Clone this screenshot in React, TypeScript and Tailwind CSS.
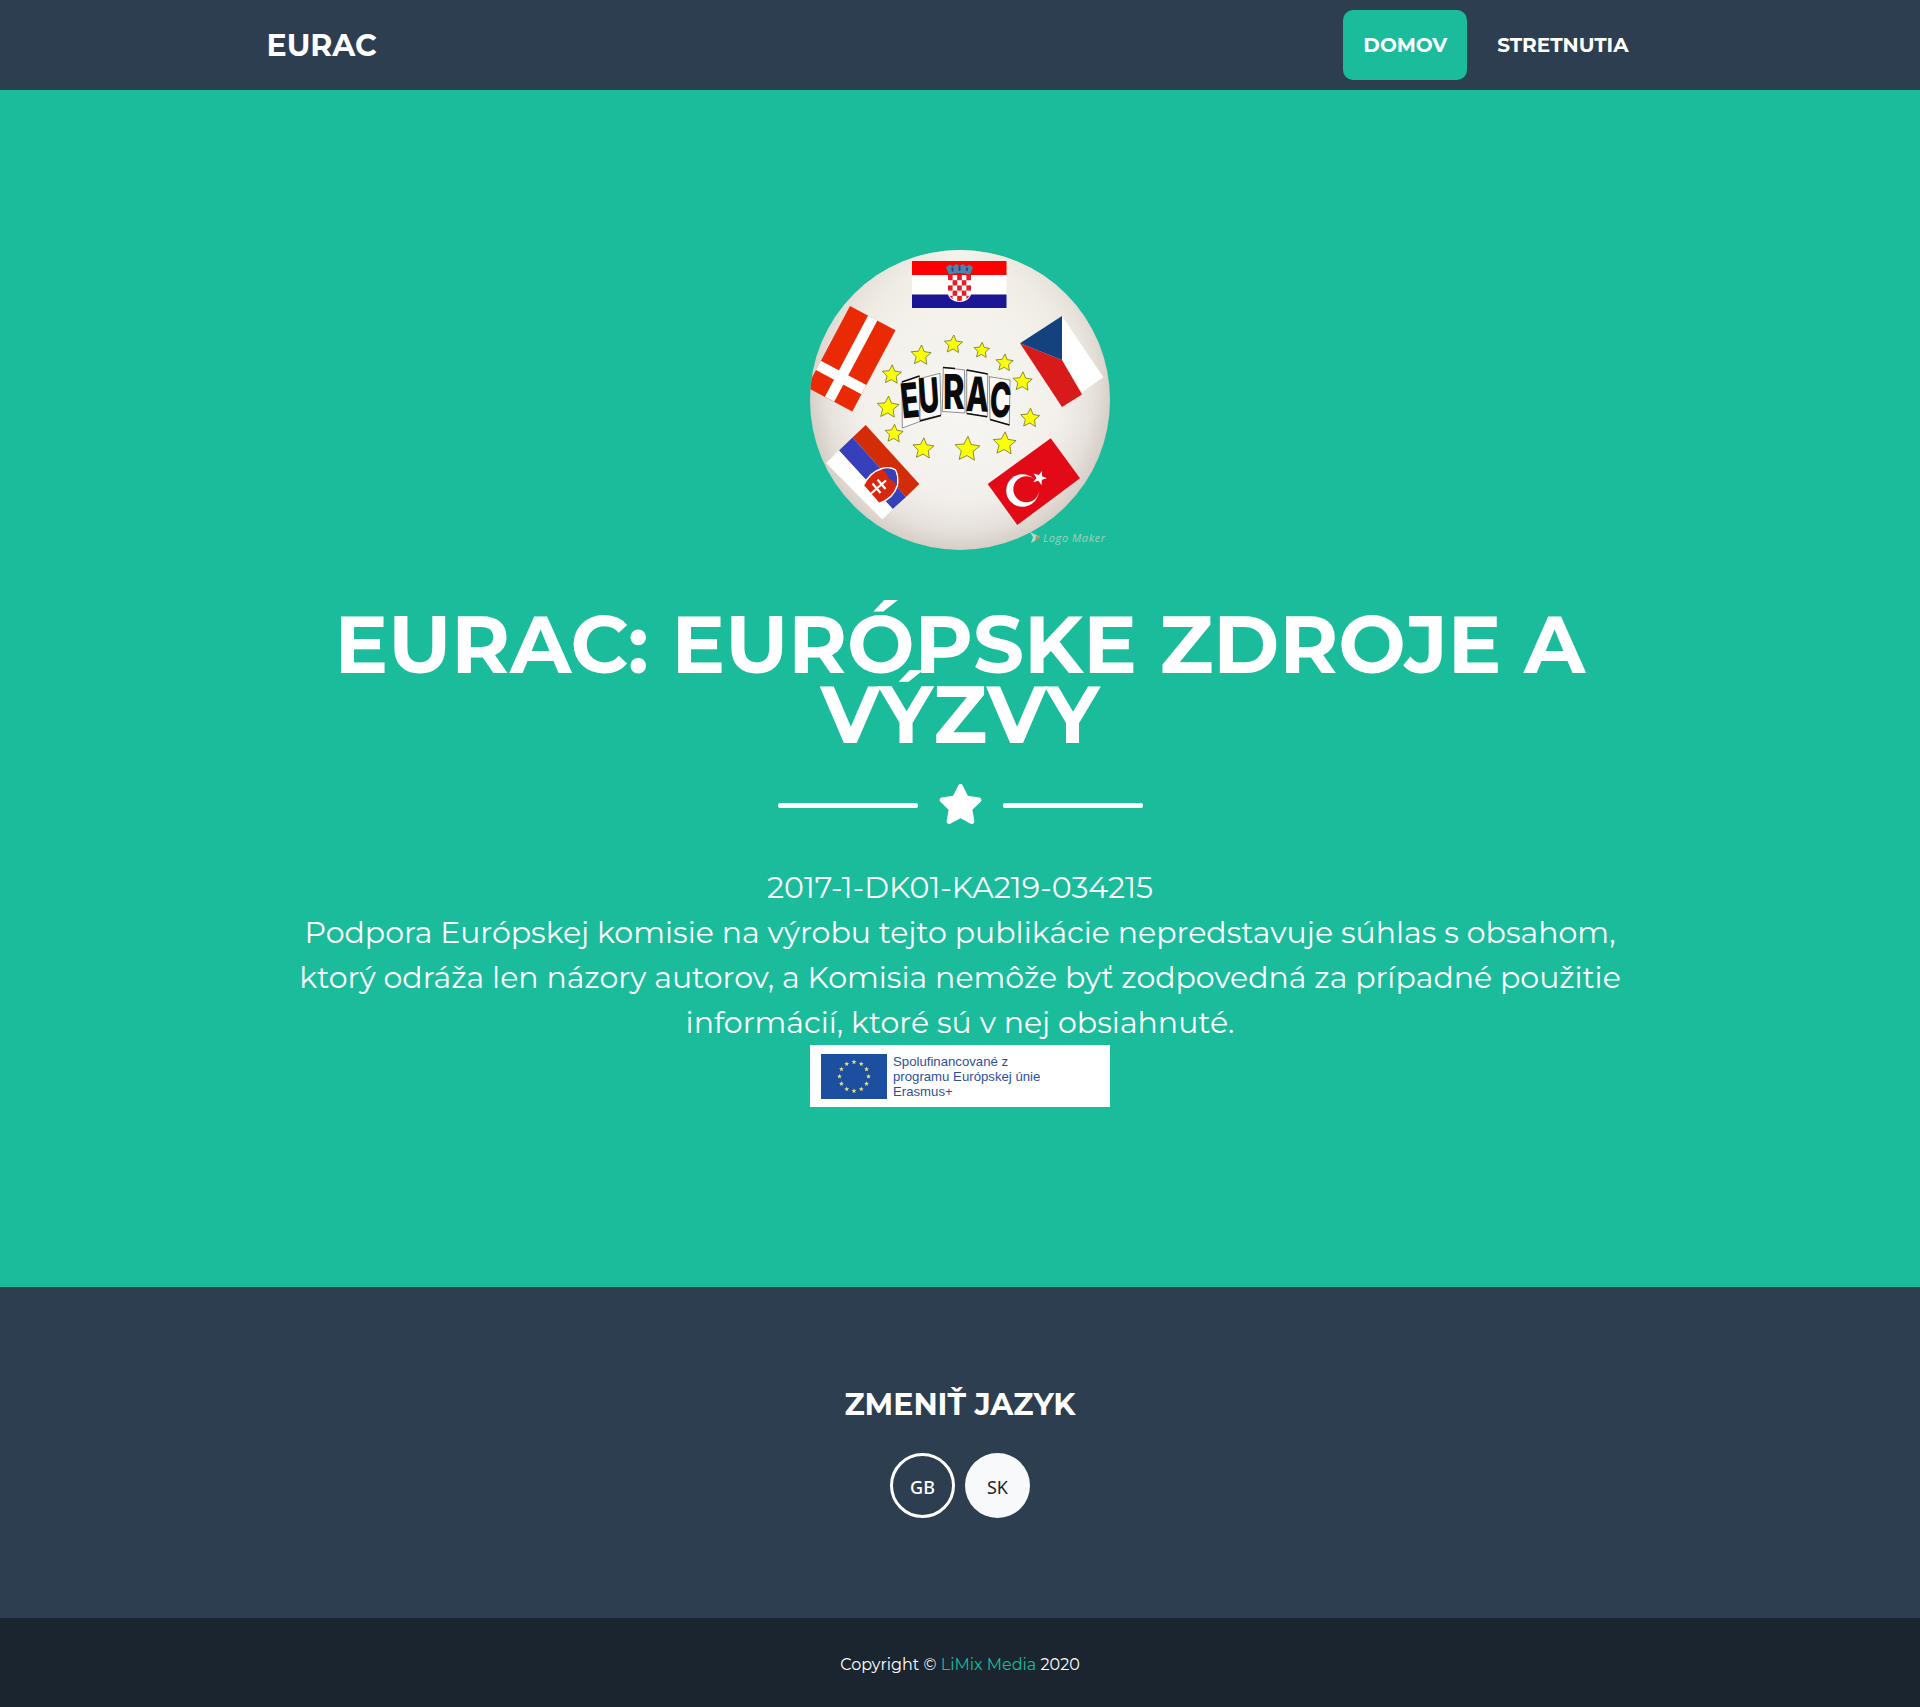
import { FaStar } from "react-icons/fa";

function star(cx: number, cy: number, r: number, turn = 0, inner = 0.45) {
  return Array.from({ length: 10 }, (_, i) => {
    const a = ((i * 36 - 90 + turn) * Math.PI) / 180;
    const d = i % 2 ? r * inner : r;
    return `${(cx + d * Math.cos(a)).toFixed(2)},${(cy + d * Math.sin(a)).toFixed(2)}`;
  }).join(" ");
}

const ring = [
  [143.3, 94.5, 9.5], [111, 105.5, 10.5], [171.7, 100.5, 8.2], [194.5, 113, 9], [81.7, 124.8, 10],
  [212.5, 131.8, 10], [78, 157.5, 11.5], [84, 183.8, 9.5], [113.3, 198.8, 11], [157.3, 199.3, 13],
  [194.5, 193.8, 12], [220, 168.2, 10],
];

const tiles = ["92,132 109.5,126 110,171.5 92.3,178", "110,128.5 130,123.3 131,165 110,170", "133.3,117.3 154.5,120 155,163 132.3,161.5", "156.7,120 177.7,124 177.3,166.5 156.7,163.3", "179.3,126.7 200,130 199.3,175 180,169.3"];

const letters = [
  { c: "E", x: 101.5, y: 167.5, s: 0.62, r: -6 },
  { c: "U", x: 120, y: 162.5, s: 0.6, r: -4 },
  { c: "R", x: 143.8, y: 159, s: 0.68, r: 0 },
  { c: "A", x: 167, y: 161.5, s: 0.62, r: 2 },
  { c: "C", x: 189.8, y: 167, s: 0.6, r: 3 },
];

const checks = Array.from({ length: 25 }, (_, i) => i).filter((i) => i % 2 === 0);

function Logo() {
  return (
    <svg viewBox="0 0 300 300" className="h-[300px] w-[300px] overflow-visible">
      <defs>
        <radialGradient id="paper">
          <stop offset="0" stopColor="#f8f7f5" />
          <stop offset="0.65" stopColor="#f3f0ec" />
          <stop offset="0.88" stopColor="#e6e0da" />
          <stop offset="1" stopColor="#d6cec7" />
        </radialGradient>
        <radialGradient id="glow" cx="0.5" cy="0" r="0.75">
          <stop offset="0" stopColor="#f4f2ea" />
          <stop offset="1" stopColor="#f4f2ea" stopOpacity="0" />
        </radialGradient>
        <clipPath id="disc"><circle cx="150" cy="150" r="150" /></clipPath>
        <clipPath id="arms"><path d="M138 25h23v14c0 8-5 12-11.500 12s-11.500-4-11.500-12z" /></clipPath>
      </defs>
      <g clipPath="url(#disc)">
        <rect width="300" height="300" fill="url(#paper)" />
        <rect width="300" height="300" fill="url(#glow)" />

        <rect x="102" y="11" width="94.500" height="14" fill="#fe0000" />
        <rect x="102" y="25" width="94.500" height="19.500" fill="#fff" />
        <rect x="102" y="44.500" width="94.500" height="13.500" fill="#1b1695" />
        <path d="M137 25h25v14c0 9-6 13-12.500 13s-12.500-4-12.500-13z" fill="#fff" />
        <g clipPath="url(#arms)">
          {checks.map((i) => (
            <rect key={i} x={138 + (i % 5) * 4.6} y={25 + Math.floor(i / 5) * 5.2} width="4.6" height="5.2" fill="#e81c24" />
          ))}
        </g>
        <path d="M139 24.500l-3-7 3.500-3 3.500 2 3-2.500 3.500 2 3.500-2 3 2.500 3.500-2 3.500 3-3 7q-10.500-3-21 0z" fill="#4387b5" />
        <path d="M142.500 17.500v4M157 17.500v3.500M149.500 16v5" stroke="#343f7d" strokeWidth="1.800" />
        <path d="M146 16.500v5M153.500 17v4" stroke="#a5607a" strokeWidth="1.500" />

        <g transform="translate(40 56) rotate(28)">
          <rect width="51.500" height="92" fill="#ea2a04" />
          <rect x="20.500" width="10.500" height="92" fill="#fff" />
          <rect y="62" width="51.500" height="10.500" fill="#fff" />
        </g>

        <polygon points="252,66 293.3,127.3 272,142 251,110" fill="#fff" />
        <polygon points="210,93.300 252,110 272,144.500 252,157" fill="#d91a1b" />
        <polygon points="210,93.300 252,66 252,110" fill="#14427f" />

        <polygon points="55.700,175 109.300,234 96,247 42.500,187.500" fill="#d22c08" />
        <polygon points="42.500,187.500 96,247 82.700,259 29,200.500" fill="#3640bb" />
        <polygon points="29,200.500 82.700,259 72.300,269.500 16,213" fill="#fff" />
        <path d="M53.300 235.500Q60 222 72 218.500Q80 216.500 85.500 220Q88.500 226 87.500 235Q84 248 69 253.500Z" fill="#d9270e" stroke="#fff" strokeWidth="1.500" />
        <path d="M72 219Q80 217.500 85 220.500Q88 228 86.500 236Q84 230 79 229Q78 224 72 219Z" fill="#3640bb" />
        <path d="M61 243.500L76 230.500M62.500 233.500L70.500 243M67.500 229.500L75.500 239" stroke="#fff" strokeWidth="2.200" />

        <polygon points="240.700,188.300 270,228.300 207.300,275 177.700,234" fill="#e30a17" />
        <circle cx="212.500" cy="240.500" r="16.300" fill="#fff" />
        <circle cx="216.300" cy="239.200" r="13" fill="#e30a17" />
        <polygon points={star(229.5, 228, 7.5, 20, 0.4)} fill="#fff" />

        {ring.map(([x, y, r]) => (
          <polygon key={`${x}-${y}`} points={star(x, y, r, 3, 0.48)} fill="#fbff06" stroke="#6f7428" strokeWidth="0.8" />
        ))}

        {tiles.map((p) => (
          <polygon key={p} points={p} fill="#fbfaf9" stroke="#4a4a4a" strokeWidth="0.6" />
        ))}
        <path d="M92 132l17.500-6M110 171l21-5.500M133 117.500l12 1M156.700 120l21 4M156.700 163.500l20.500 3.200M180 169.500l19.500 5.500" stroke="#111" strokeWidth="1.500" fill="none" />
        {letters.map((l) => (
          <text key={l.c} transform={`translate(${l.x} ${l.y}) rotate(${l.r}) scale(${l.s} 1)`} textAnchor="middle" className="fill-[#0a0a0a] font-['Inter',sans-serif] text-[48px] font-extrabold">
            {l.c}
          </text>
        ))}
      </g>
      <path d="M220 282l10 5-4 3-5 3 2-6z" fill="#cde6dc" opacity="0.8" />
      <path d="M226 286l4 1-5 5z" fill="#c98a4a" />
      <text x="233" y="292" textLength="62" className="fill-[#a9cdbd] font-['Open_Sans',sans-serif] text-[11px] italic">Logo Maker</text>
    </svg>
  );
}

function ErasmusBanner() {
  return (
    <div className="flex h-[62px] w-[300px] items-center bg-white pl-[11px]">
      <svg viewBox="0 0 66 45" className="h-[45px] w-[66px] shrink-0">
        <rect width="66" height="45" fill="#1d4fa0" />
        {Array.from({ length: 12 }, (_, i) => (
          <polygon key={i} points={star(33 + 14.5 * Math.sin((i * Math.PI) / 6), 22.5 + 14.5 * Math.cos((i * Math.PI) / 6), 2.5)} fill="#e3e07c" />
        ))}
      </svg>
      <p className="ml-1.5 text-left font-['Liberation_Sans',sans-serif] text-[13.2px] leading-[15px] font-normal whitespace-nowrap text-[#2f4f9a]">
        Spolufinancované z<br />programu Európskej únie<br />Erasmus+
      </p>
    </div>
  );
}

export default function App() {
  return (
    <div className="font-['Montserrat','Inter',sans-serif] text-white">
      <header className="h-[90px] bg-[#2c3e50]">
        <div className="mx-auto flex h-full w-[1387px] items-center justify-between">
          <a className="text-[30px] font-bold">EURAC</a>
          <nav className="flex gap-2.5 pr-[5px] text-[20px] font-bold">
            <a className="flex h-[70px] items-center rounded-[10px] bg-[#1abc9c] px-5">DOMOV</a>
            <a className="flex h-[70px] items-center px-5">STRETNUTIA</a>
          </nav>
        </div>
      </header>

      <main className="flex h-[1197px] flex-col items-center bg-[#1abc9c] pt-40 text-center">
        <Logo />
        <h1 className="mt-[60px] w-[1390px] text-[80px] leading-[70px] font-bold">EURAC: EURÓPSKE ZDROJE A VÝZVY</h1>
        <div className="mt-[25px] flex h-[60px] items-center gap-5">
          <div className="h-[5px] w-[140px] rounded-[2px] bg-white" />
          <FaStar className="mb-0.5 h-10 w-[45px]" />
          <div className="h-[5px] w-[140px] rounded-[2px] bg-white" />
        </div>
        <div className="mt-[30px] w-[1390px] text-[30px] leading-[45px] font-normal">
          2017-1-DK01-KA219-034215<br />
          Podpora Európskej komisie na výrobu tejto publikácie nepredstavuje súhlas s obsahom,<br />
          ktorý odráža len názory autorov, a Komisia nemôže byť zodpovedná za prípadné použitie<br />
          informácií, ktoré sú v nej obsiahnuté.
        </div>
        <ErasmusBanner />
      </main>

      <footer>
        <section className="flex h-[331px] flex-col items-center bg-[#2c3e50] pt-[100px]">
          <h4 className="text-[30px] leading-9 font-bold">ZMENIŤ JAZYK</h4>
          <div className="mt-[30px] flex gap-2.5 font-['Noto_Sans',sans-serif] text-[18px]">
            <a className="flex h-[65px] w-[65px] items-center justify-center rounded-full border-[3px] border-white pt-1 font-medium">GB</a>
            <a className="flex h-[65px] w-[65px] items-center justify-center rounded-full bg-[#f8f9fa] pt-1 text-[#212529]">SK</a>
          </div>
        </section>
        <section className="flex h-[89px] items-center justify-center bg-[#1a252f] pt-[5px] text-base">
          <p>Copyright © <a className="text-[#1abc9c]">LiMix Media</a> 2020</p>
        </section>
      </footer>
    </div>
  );
}
